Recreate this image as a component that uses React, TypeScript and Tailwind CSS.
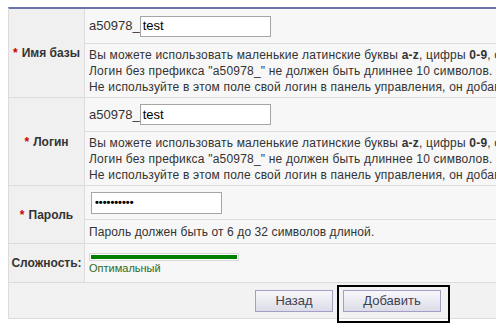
import React from "react";

const font = { fontFamily: '"Liberation Sans", Arial, sans-serif' };

function Label({ text, star = true }: { text: string; star?: boolean }) {
  return (
    <div className="w-[76px] shrink-0 bg-[#f0f0f0] border-r border-[#dcdcdc] flex items-center justify-center font-bold text-[12px] text-[#333] whitespace-nowrap">
      {star && <span className="text-[#cc0000] mr-[4px]">*</span>}
      {text}
    </div>
  );
}

function Desc() {
  return (
    <div className="h-[53px] flex flex-col justify-center pl-[4px] text-[12px] tracking-[0.2px] leading-[16px] text-[#333] whitespace-nowrap">
      <div>
        Вы можете использовать маленькие латинские буквы <b>a-z</b>, цифры <b>0-9</b>, символ подчеркивания <b>_</b>.
      </div>
      <div>Логин без префикса "a50978_" не должен быть длиннее 10 символов.</div>
      <div>Не используйте в этом поле свой логин в панель управления, он добавится автоматически.</div>
    </div>
  );
}

function PrefixInput({ h }: { h: string }) {
  return (
    <div className={`${h} flex items-center pl-[4px] border-b border-[#dcdcdc]`}>
      <span className="text-[13px] text-[#333]">a50978_</span>
      <div className="w-[131px] h-[21px] border border-[#a5a5a5] bg-white flex items-center pl-[2px] text-[13px] text-black">
        test
      </div>
    </div>
  );
}

export default function App() {
  return (
    <div className="w-[496px] h-[332px] overflow-hidden bg-white relative" style={font}>
      <div className="pt-[7px] pl-[8px]">
        <div className="w-[700px] border-t-2 border-t-[#6a76ab] border-l border-l-[#dcdcdc] border-b border-b-[#dcdcdc]">
          {/* Имя базы */}
          <div className="flex border-b border-[#dcdcdc]">
            <Label text="Имя базы" />
            <div className="flex-1 bg-[#f7f7f7] flex flex-col">
              <PrefixInput h="h-[35px]" />
              <Desc />
            </div>
          </div>
          {/* Логин */}
          <div className="flex border-b border-[#dcdcdc]">
            <Label text="Логин" />
            <div className="flex-1 bg-[#f7f7f7] flex flex-col">
              <PrefixInput h="h-[34px]" />
              <Desc />
            </div>
          </div>
          {/* Пароль */}
          <div className="flex border-b border-[#dcdcdc]">
            <Label text="Пароль" />
            <div className="flex-1 bg-[#f7f7f7] flex flex-col">
              <div className="h-[34px] flex items-center pl-[6px] border-b border-[#dcdcdc]">
                <div className="w-[131px] h-[22px] border border-[#a5a5a5] bg-white flex items-center pl-[3px] text-[11px] font-bold text-black">
                  ••••••••••
                </div>
              </div>
              <div className="h-[23px] flex items-center pl-[4px] text-[12px] tracking-[0.1px] text-[#333] whitespace-nowrap">
                Пароль должен быть от 6 до 32 символов длиной.
              </div>
            </div>
          </div>
          {/* Сложность */}
          <div className="flex border-b border-[#dcdcdc]">
            <Label text="Сложность:" star={false} />
            <div className="flex-1 bg-[#f7f7f7] h-[38px] flex flex-col justify-center pl-[4px] pt-[1px]">
              <div className="w-[150px] h-[8px] border border-[#d8d8d8] bg-white p-[1px]">
                <div className="h-full w-full bg-[#008000]" />
              </div>
              <div className="text-[11px] leading-[12px] mt-[1px] text-[#2f6a24]">Оптимальный</div>
            </div>
          </div>
          {/* Buttons */}
          <div className="h-[35px] bg-[#f2f2f2] flex items-center pl-[246px] gap-[10px]">
            <button className="w-[78px] h-[22px] border border-[#a29fc6] bg-gradient-to-b from-[#f7f7fb] to-[#dcdce8] text-[13px] text-[#404050]">
              Назад
            </button>
            <div className="relative">
              <button className="w-[98px] h-[22px] border border-[#a29fc6] bg-gradient-to-b from-[#f7f7fb] to-[#dcdce8] text-[13px] text-[#404050] block">
                Добавить
              </button>
              <div className="absolute left-[-6px] top-[-5px] w-[113px] h-[38px] border-2 border-black pointer-events-none" />
            </div>
          </div>
        </div>
      </div>
    </div>
  );
}
